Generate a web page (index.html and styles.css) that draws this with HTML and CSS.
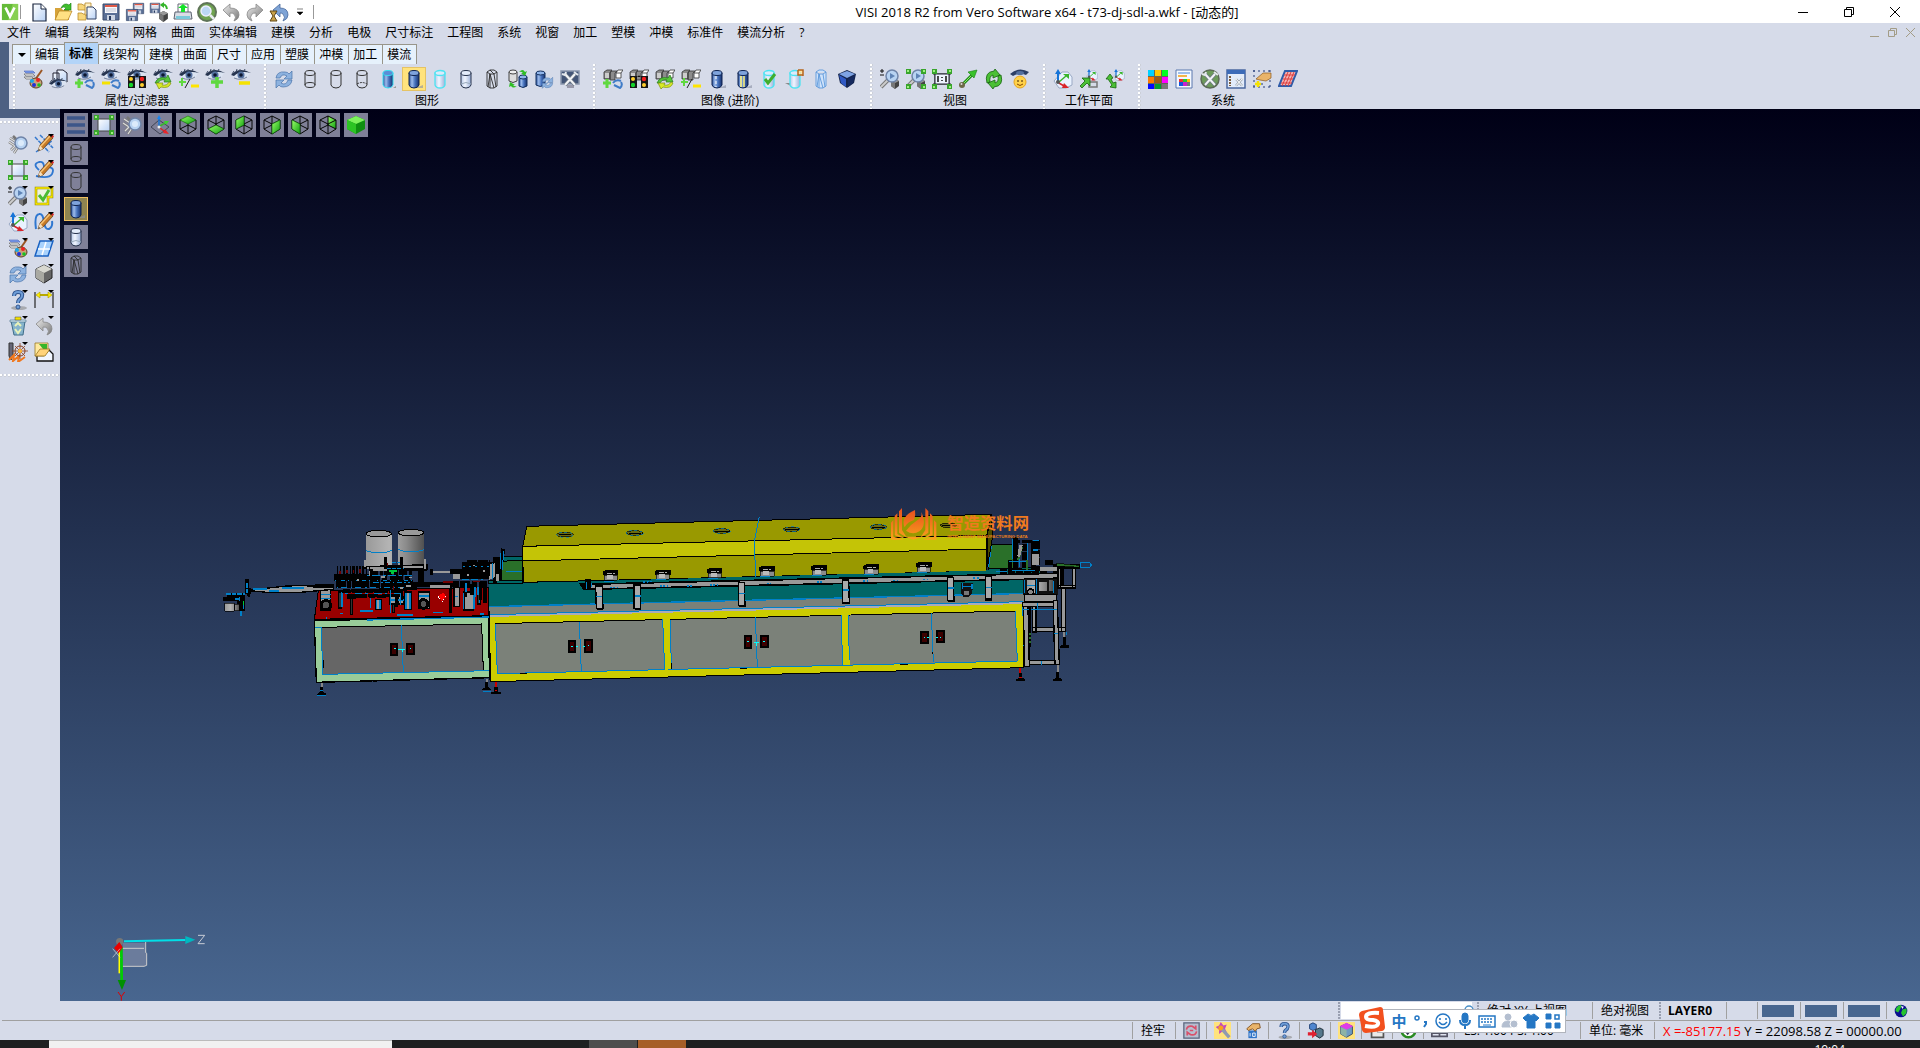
FILE: index.html
```html
<!DOCTYPE html>
<html lang="zh-CN">

<head>
  <meta charset="utf-8">
  <title>VISI 2018 R2</title>
  <link rel="stylesheet" href="styles.css">
</head>

<body>
  <!-- icon sprite, every icon sits in a 20x20 box -->
  <svg class="sprite" aria-hidden="true">
    <defs>
      <linearGradient id="gBlue"><stop offset="0" stop-color="#2c539c"/><stop offset=".3" stop-color="#9dbcec"/><stop offset=".6" stop-color="#4672bd"/><stop offset="1" stop-color="#17306c"/></linearGradient>
      <linearGradient id="gPale"><stop offset="0" stop-color="#b9c9e8"/><stop offset=".4" stop-color="#f0f5ff"/><stop offset="1" stop-color="#9db1d8"/></linearGradient>
      <linearGradient id="gGreen" x2="1" y2="1"><stop offset="0" stop-color="#9aff6a"/><stop offset="1" stop-color="#10a010"/></linearGradient>
      <linearGradient id="gGrey" x2="1" y2="1"><stop offset="0" stop-color="#eee"/><stop offset="1" stop-color="#777"/></linearGradient>
      <linearGradient id="gPaper" x2="1" y2="1"><stop offset="0" stop-color="#fff"/><stop offset="1" stop-color="#b9d2f5"/></linearGradient>
      <linearGradient id="gDrum"><stop offset="0" stop-color="#999"/><stop offset=".4" stop-color="#b4b4b4"/><stop offset=".7" stop-color="#8a8a8a"/><stop offset="1" stop-color="#505050"/></linearGradient>
      <linearGradient id="gLotus" x2="0" y2="1"><stop offset="0" stop-color="#e8501e"/><stop offset="1" stop-color="#f9a11c"/></linearGradient>
    </defs>

    <!-- small parts used inside other icons -->
    <symbol id="p-eye" viewBox="0 0 20 20"><path d="M0 6Q8-2 19 4L16 9Q9 12 3 8Z" fill="#dbe4f2"/><path d="M0 6Q8-3 20 4Q9 1 3 7Z" fill="#26344f"/><path d="M1 5L3 2M5 3L6 0M9 2V0M13 2L14 0" stroke="#3d4a62" stroke-width="1"/><circle cx="10" cy="6" r="3.500" fill="#54719f"/><circle cx="10" cy="6" r="1.800" fill="#0c1730"/><path d="M3 9Q10 12 16 8" stroke="#77839c" fill="none"/></symbol>
    <symbol id="p-plus" viewBox="0 0 20 20"><path d="M4 10v9M0 14h8" stroke="#5fd83f" stroke-width="3" fill="none"/></symbol>
    <symbol id="p-hook" viewBox="0 0 20 20"><path d="M10 14Q13 10 18 12M11 16L17 19Q20 16 18 13" stroke="#3f7cc8" stroke-width="2" fill="none"/></symbol>
    <symbol id="p-lights" viewBox="0 0 20 20"><path d="M1 7h7v12H1zM12 7h7v12h-7zM8 8q2-3 4 0" fill="#161616"/><circle cx="4" cy="10" r="2" fill="#ffcf2e"/><circle cx="4" cy="16" r="2.200" fill="#15d42a"/><circle cx="15" cy="10" r="2.200" fill="#f32020"/><circle cx="15" cy="16" r="2" fill="#ffcf2e"/></symbol>
    <symbol id="p-cycle" viewBox="0 0 20 20"><path d="M2 14Q5 7 13 9L15 6L18 13L11 13L12 11Q7 10 5 14Z" fill="#57c63a" stroke="#23791b" stroke-width=".7"/><path d="M18 14Q16 20 8 18L6 20L3 14L10 14L9 16Q14 17 16 13Z" fill="#d8ea28" stroke="#7c9010" stroke-width=".7"/></symbol>
    <symbol id="p-pm" viewBox="0 0 20 20"><path d="M3 9v8M0 13h7" stroke="#5fd83f" stroke-width="2"/><path d="M11 10L6 19" stroke="#222"/><path d="M12 17h8" stroke="#ffe400" stroke-width="3"/></symbol>
    <symbol id="p-cubes" viewBox="0 0 20 20"><path d="M1 3L4 1H9L7 3V10H1ZM7 4L9 2H14L12 4V11H7Z" fill="#8c8c8c" stroke="#333" stroke-width=".8"/><path d="M2 4h4v5H2z" fill="#ccc"/><path d="M13 4L15 1H20L18 4V9H13ZM13 4H18" fill="#fff" stroke="#333" stroke-width=".8"/></symbol>
    <symbol id="p-lens" viewBox="0 0 20 20"><path d="M1 18L8 11" stroke="#777" stroke-width="4"/><path d="M1 18L8 11" stroke="#ccc" stroke-width="2"/><circle cx="12" cy="7" r="6" fill="#b8d3f2" stroke="#6f84a8" stroke-width="1.500"/><path d="M10 4l5 3-5 3z" fill="#5f83b5"/></symbol>
    <symbol id="p-box" viewBox="0 0 20 20"><path d="M11 12L15 10L19 12V17L15 20L11 17Z" fill="#444"/><path d="M11 12L15 10L19 12L15 14Z" fill="#999"/><path d="M11 12L15 14V20L11 17Z" fill="#777"/></symbol>
    <symbol id="p-corners" viewBox="0 0 20 20"><path d="M0 0h5v5H0zM15 0h5v5h-5zM0 15h5v5H0zM15 15h5v5h-5z" fill="#39a52c"/><path d="M1 1h2v2H1zM17 1h2v2h-2zM1 17h2v2H1zM17 17h2v2h-2z" fill="#9df07f"/></symbol>
    <symbol id="p-pencil" viewBox="0 0 20 20"><path d="M4 17L6 11L15 1L19 4L9 15Z" fill="#c77b28" stroke="#5b3510" stroke-width=".7"/><path d="M7 12L16 2" stroke="#f7c374" stroke-width="1.500"/><path d="M4 17L6 11L9 15Z" fill="#f5dfbd"/><path d="M15 1l4 3 1-2-3-2z" fill="#d22"/><path d="M4 17l1-2 1 1z" fill="#222"/></symbol>
    <symbol id="p-tri" viewBox="0 0 20 20"><path d="M14 0h6l-3 3z" fill="#000"/></symbol>
    <symbol id="p-wrench" viewBox="0 0 20 20"><path d="M5 5L15 16M15 5L5 16" stroke="#707a88" stroke-width="3.500"/><path d="M5 5L15 16M15 5L5 16" stroke="#f2f4f6" stroke-width="2"/><path d="M2 5L5 6L6 3M14 3L18 6" stroke="#e4e8ec" stroke-width="2" fill="none"/></symbol>
    <symbol id="p-cube" viewBox="0 0 20 20"><path d="M10 1L18 5V14L10 19L2 14V5ZM10 9V19M2 5L10 9L18 5M10 1V10M2 14L10 10L18 14" fill="none" stroke="#050505"/></symbol>

    <!-- quick access -->
    <symbol id="visi" viewBox="0 0 20 20"><path d="M1 1h18v18H1z" fill="#64bb38"/><path d="M13 1h6v18H8z" fill="#87d052"/><path d="M5 5L10 15L15 5" stroke="#fff" stroke-width="3" fill="none"/></symbol>
    <symbol id="new" viewBox="0 0 20 20"><path d="M4 2H12L17 7V19H4Z" fill="url(#gPaper)" stroke="#1b2740" stroke-width="1.200"/><path d="M12 2V7H17" fill="#fff" stroke="#1b2740"/></symbol>
    <symbol id="open" viewBox="0 0 20 20"><path d="M2 6H8L10 8H16V18H2Z" fill="#d6a33a"/><path d="M2 18L6 9H19L15 18Z" fill="#ffe082" stroke="#b07b1a" stroke-width=".7"/><path d="M8 6Q11 0 16 3L18 1V8H11L13 6Q11 4 8 6Z" fill="#3fbf2c" stroke="#177a10" stroke-width=".6"/></symbol>
    <symbol id="opendoc" viewBox="0 0 20 20"><path d="M1 2H5L6 3H9V8H1ZM1 11H5L6 12H9V18H1Z" fill="#f8d77b" stroke="#b78a2c" stroke-width=".8"/><path d="M8 1H14V13H8Z" fill="#fff1c6" stroke="#b78a2c" stroke-width=".8"/><path d="M10 5H16L19 8V17H10Z" fill="url(#gPaper)" stroke="#324264"/></symbol>
    <symbol id="save" viewBox="0 0 20 20"><path d="M2 2H18V18H2Z" fill="#5a6f96" stroke="#3a4b6d"/><path d="M4 3H16V11H4Z" fill="#f7f7fb"/><path d="M4 3H16V5H4Z" fill="#e05a48"/><path d="M5 7H15M5 9H15" stroke="#a8b0c4" stroke-width=".7"/><path d="M6 13H14V18H6Z" fill="#cbd3e2"/><path d="M8 14h2v4H8z" fill="#26395f"/></symbol>
    <symbol id="saveall" viewBox="0 0 20 20"><use href="#save" x="7" y="0" width="13" height="13"/><use href="#save" x="0" y="6" width="14" height="14"/></symbol>
    <symbol id="savecube" viewBox="0 0 20 20"><use href="#save" x="0" y="0" width="12" height="12"/><path d="M12 3Q17 1 18 7" stroke="#35b52a" stroke-width="2" fill="none"/><path d="M11 3l4-3v6z" fill="#35b52a"/><use href="#p-box" x="-2" y="-2" width="22" height="22"/></symbol>
    <symbol id="print" viewBox="0 0 20 20"><path d="M5 2H15V11H5Z" fill="#fff" stroke="#667"/><path d="M2 10H18L19 17H1Z" fill="#d9dde4" stroke="#5c6370"/><path d="M3 14H17V17H3Z" fill="#7bc9d9"/><path d="M10 2L15 6H12V10H8V6H5Z" fill="#16e22a"/></symbol>
    <symbol id="search" viewBox="0 0 20 20"><circle cx="10" cy="10" r="9" fill="#6fa350" stroke="#5f7458" stroke-width="2"/><circle cx="9" cy="9" r="5" fill="#bcd8f4" stroke="#eef" stroke-width="1.500"/><path d="M13 13L17 17" stroke="#e8edf2" stroke-width="2.500"/></symbol>
    <symbol id="undo" viewBox="0 0 20 20"><path d="M2 8L9 2V6Q18 6 18 13Q18 17 13 19Q16 15 13 12Q12 11 9 11V15Z" fill="url(#gGrey)" stroke="#888" stroke-width=".8"/></symbol>
    <symbol id="redo" viewBox="0 0 20 20"><path d="M18 8L11 2V6Q2 6 2 13Q2 17 7 19Q4 15 7 12Q8 11 11 11V15Z" fill="url(#gGrey)" stroke="#888" stroke-width=".8"/></symbol>
    <symbol id="undohist" viewBox="0 0 20 20"><path d="M4 8L11 2V6Q19 6 19 13Q19 17 14 19Q17 15 14 12Q13 11 11 11V15Z" fill="#7fa4d6" stroke="#48689c" stroke-width=".8"/><path d="M1 9H8L5 14L8 19H1L4 14Z" fill="#c9a24a" stroke="#5e4614"/></symbol>

    <!-- attributes / filter -->
    <symbol id="palette" viewBox="0 0 20 20"><path d="M1 2H10L12 4H3Z" fill="#7d9ef0" stroke="#4b62b5" stroke-width=".6"/><path d="M1 5H10L12 7H3ZM1 8H9L11 10H3Z" fill="#f3f3f3" stroke="#666" stroke-width=".7"/><path d="M19 1L12 11" stroke="#9b5624" stroke-width="2"/><ellipse cx="13" cy="14" rx="6" ry="5" fill="#c9a178" stroke="#5b3f22"/><circle cx="15" cy="11" r="2" fill="#e22"/><circle cx="9" cy="12" r="2" fill="#19a8e8"/><circle cx="16" cy="16" r="1.800" fill="#17c321"/><circle cx="11" cy="16" r="2" fill="#2032d8"/></symbol>
    <symbol id="docseye" viewBox="0 0 20 20"><path d="M4 4H10V13H4ZM8 1H14L18 4V13H8Z" fill="url(#gPaper)" stroke="#223"/><use href="#p-eye" x="0" y="9" width="19" height="19"/></symbol>
    <symbol id="eyeplushook" viewBox="0 0 20 20"><use href="#p-eye"/><use href="#p-plus"/><use href="#p-hook"/></symbol>
    <symbol id="eyeminushook" viewBox="0 0 20 20"><use href="#p-eye"/><path d="M1 14H9" stroke="#f5e200" stroke-width="3"/><use href="#p-hook"/></symbol>
    <symbol id="eyelights" viewBox="0 0 20 20"><use href="#p-eye"/><use href="#p-lights"/></symbol>
    <symbol id="eyecycle" viewBox="0 0 20 20"><use href="#p-eye"/><use href="#p-cycle"/></symbol>
    <symbol id="eyepm" viewBox="0 0 20 20"><use href="#p-eye"/><use href="#p-pm"/></symbol>
    <symbol id="eyeplus" viewBox="0 0 20 20"><use href="#p-eye"/><path d="M12 8V19M6 13H18" stroke="#5fd83f" stroke-width="3.500"/></symbol>
    <symbol id="eyeminus" viewBox="0 0 20 20"><use href="#p-eye"/><path d="M8 14H19" stroke="#f5e200" stroke-width="3.500"/></symbol>

    <!-- shading -->
    <symbol id="refresh" viewBox="0 0 20 20"><path d="M2 9Q3 2 11 3Q14 3 15 5L18 2V10H10L13 7Q8 4 6 9Z" fill="#8db2df" stroke="#4973ab" stroke-width=".7"/><path d="M18 11Q17 18 9 18Q6 18 5 16L2 19V11H10L7 14Q12 17 14 11Z" fill="#8db2df" stroke="#4973ab" stroke-width=".7"/></symbol>
    <symbol id="cylwire" viewBox="0 0 20 20"><path d="M5 4V16M15 4V16" stroke="#333"/><ellipse cx="10" cy="4" rx="5" ry="2.500" fill="none" stroke="#333"/><ellipse cx="10" cy="16" rx="5" ry="2.500" fill="none" stroke="#333"/></symbol>
    <symbol id="cylhid" viewBox="0 0 20 20"><path d="M5 4V16Q6 19 10 19Q14 19 15 16V4" fill="none" stroke="#333"/><ellipse cx="10" cy="4" rx="5" ry="2.500" fill="none" stroke="#333"/></symbol>
    <symbol id="cyldash" viewBox="0 0 20 20"><use href="#cylhid"/><path d="M5 15Q10 12 15 15" fill="none" stroke="#333" stroke-dasharray="2 1"/></symbol>
    <symbol id="cylblue" viewBox="0 0 20 20"><path d="M12 19L19 16V19Z" fill="#8990a3" opacity=".6"/><path d="M5 4V16Q6 19 10 19Q14 19 15 16V4Z" fill="url(#gBlue)" stroke="#0e2350"/><ellipse cx="10" cy="4" rx="5" ry="2.500" fill="#7ea3dc" stroke="#0e2350"/></symbol>
    <symbol id="cylcyan" viewBox="0 0 20 20"><path d="M5 4V16Q6 19 10 19Q14 19 15 16V4Z" fill="url(#gBlue)" stroke="#37dff2"/><ellipse cx="10" cy="4" rx="5" ry="2.500" fill="#5b8dd6" stroke="#37dff2"/><path d="M15 19l3-2v2z" fill="#999"/></symbol>
    <symbol id="cylice" viewBox="0 0 20 20"><path d="M5 4V16Q6 19 10 19Q14 19 15 16V4Z" fill="url(#gPale)" stroke="#4de4f2" stroke-width="1.300"/><ellipse cx="10" cy="4" rx="5" ry="2.500" fill="#dceafa" stroke="#4de4f2" stroke-width="1.300"/></symbol>
    <symbol id="cylpale" viewBox="0 0 20 20"><path d="M5 4V16Q6 19 10 19Q14 19 15 16V4Z" fill="url(#gPale)" stroke="#26324c"/><ellipse cx="10" cy="4" rx="5" ry="2.500" fill="#e3ecfb" stroke="#26324c"/><path d="M5 15Q10 12 15 15" fill="none" stroke="#9ab"/></symbol>
    <symbol id="cylmesh" viewBox="0 0 20 20"><path d="M5 3L8 1H12L15 3V17L12 19H8L5 17ZM5 3L8 5H12L15 3M8 5L6 18M8 5L12 19M12 5L14 18M8 1L12 5M8 5V19" fill="none" stroke="#2a2a2a" stroke-width=".9"/></symbol>
    <symbol id="cylmeshblue" viewBox="0 0 20 20"><path d="M5 3L8 1H12L15 3V17L12 19H8L5 17ZM5 3L8 5H12L15 3M8 5L6 18M8 5L12 19M12 5L14 18M8 5V19" fill="#cfe2fa" stroke="#5b97da" stroke-width=".9"/></symbol>
    <symbol id="cylpair" viewBox="0 0 20 20"><path d="M1 3V12Q5 15 9 12V3" fill="#ddd" stroke="#444"/><ellipse cx="5" cy="3" rx="4" ry="2" fill="#eee" stroke="#444"/><path d="M11 8V17Q15 20 19 17V8" fill="url(#gBlue)" stroke="#14305f"/><ellipse cx="15" cy="8" rx="4" ry="2" fill="#8fb4ea" stroke="#14305f"/><path d="M11 3Q15-1 17 3L19 2L17 7L13 4L15 4Q13 2 11 3ZM9 17Q5 20 3 17L1 18L2 13L7 16H5Q7 18 9 17Z" fill="#2fbd25"/></symbol>
    <symbol id="cylrefresh" viewBox="0 0 20 20"><path d="M2 4V16Q6 19 11 16V4" fill="url(#gBlue)" stroke="#14305f"/><ellipse cx="6.500" cy="4" rx="4.500" ry="2" fill="#8fb4ea" stroke="#14305f"/><use href="#refresh" x="7" y="7" width="13" height="13"/></symbol>
    <symbol id="tools" viewBox="0 0 20 20"><path d="M1 2H19V15H1Z" fill="#435577" stroke="#8a97ad" stroke-width="1.500"/><path d="M7 16h7v3H7z" fill="#99a"/><use href="#p-wrench"/></symbol>

    <!-- advanced image -->
    <symbol id="cubeshook" viewBox="0 0 20 20"><use href="#p-cubes"/><use href="#p-plus"/><use href="#p-hook"/></symbol>
    <symbol id="cubeslights" viewBox="0 0 20 20"><use href="#p-cubes"/><use href="#p-lights"/></symbol>
    <symbol id="cubescycle" viewBox="0 0 20 20"><use href="#p-cubes"/><use href="#p-cycle"/></symbol>
    <symbol id="cubespm" viewBox="0 0 20 20"><use href="#p-cubes"/><use href="#p-pm"/></symbol>
    <symbol id="cylseam" viewBox="0 0 20 20"><use href="#cylblue"/><path d="M9 7V18" stroke="#fff" stroke-dasharray="3 2"/></symbol>
    <symbol id="cylstripe" viewBox="0 0 20 20"><use href="#cylblue"/><path d="M8 7V18M11 7V18" stroke="#fff27a" stroke-width="1.500"/></symbol>
    <symbol id="cylcheck" viewBox="0 0 20 20"><use href="#cylice"/><path d="M6 10L9 14L16 5" stroke="#3fae2c" stroke-width="3" fill="none"/></symbol>
    <symbol id="cylcorner" viewBox="0 0 20 20"><path d="M0 14H8V18Z" fill="#888"/><use href="#cylice"/><path d="M13 1h5v6M13 1v5h5" fill="#ffe2a0" stroke="#b5651d" stroke-width="1.500"/></symbol>
    <symbol id="cubeblue" viewBox="0 0 20 20"><path d="M1 5L10 1L19 5L17 14L10 19L3 14Z" fill="#14244c"/><path d="M2 5L10 2L18 5L10 9Z" fill="#7fa4e4"/><path d="M2 6L9 10V18L4 14Z" fill="#3059c4"/><path d="M11 10L18 6L16 14L11 18Z" fill="#16295e"/></symbol>

    <!-- view -->
    <symbol id="zoompm" viewBox="0 0 20 20"><use href="#p-box"/><use href="#p-lens"/><path d="M0 2h4M2 0v4M0 6h4" stroke="#111"/></symbol>
    <symbol id="zoomfit" viewBox="0 0 20 20"><use href="#p-box"/><use href="#p-lens"/><use href="#p-corners"/></symbol>
    <symbol id="fit11" viewBox="0 0 20 20"><path d="M3 1V19M17 1V19M1 5H19M1 15H19" stroke="#222"/><path d="M3 5H17V15H3Z" fill="#eef3ff" stroke="#223"/><path d="M6 7V13M14 7V13M10 8v1M10 11v1" stroke="#111" stroke-width="1.500"/><use href="#p-corners"/></symbol>
    <symbol id="line" viewBox="0 0 20 20"><path d="M4 16L15 5" stroke="#1f8f16" stroke-width="3"/><path d="M4 16L15 5" stroke="#8ee86c" stroke-width="1"/><path d="M19 1L10 3L16 9Z" fill="#39c22a" stroke="#177a10" stroke-width=".6"/><circle cx="4" cy="16" r="3" fill="#6d6a48"/><circle cx="3.500" cy="15" r="1" fill="#ddd"/></symbol>
    <symbol id="rotate" viewBox="0 0 20 20"><path d="M3 14Q0 3 10 2L11 0L16 6L9 9V6Q5 7 6 13ZM17 6Q20 17 10 18L9 20L4 14L11 11V14Q15 13 14 7Z" fill="#4bc035" stroke="#17650f" stroke-width=".8"/></symbol>
    <symbol id="smile" viewBox="0 0 20 20"><circle cx="10" cy="13" r="6" fill="#ffd24a" stroke="#e8a51f"/><path d="M7 15Q10 18 13 15" stroke="#8a4a00" fill="none"/><path d="M8 11v2M12 11v2" stroke="#402000"/><path d="M0 5Q9-3 19 3L16 6Q9 3 3 7Z" fill="#2c3f66"/><ellipse cx="10" cy="4" rx="4" ry="2" fill="#54709f"/></symbol>

    <!-- work plane -->
    <symbol id="axes" viewBox="0 0 20 20"><path d="M1 12L9 3H15L19 8V16L13 19H6Z" fill="#e9f2ff" stroke="#9aa9c4"/><path d="M5 13V4" stroke="#1674d8" stroke-width="2"/><path d="M2 5L5 0L8 5Z" fill="#1674d8"/><path d="M6 13L13 7" stroke="#39b52c" stroke-width="1.500"/><path d="M10 5H16V10Z" fill="#39b52c"/><path d="M6 14L11 17" stroke="#d9252a" stroke-width="1.500"/><path d="M9 19L11 14L16 19Z" fill="#d9252a"/><circle cx="5" cy="13" r="2" fill="#555"/></symbol>
    <symbol id="axesdark" viewBox="0 0 20 20"><path d="M1 12L9 5L19 12L10 19Z" fill="none" stroke="#3f4354"/><path d="M9 12V3" stroke="#1674d8" stroke-width="1.500"/><path d="M7 4L9 0L11 4Z" fill="#1684f0"/><path d="M10 11L15 8" stroke="#39b52c" stroke-width="1.500"/><path d="M14 6H19L16 10Z" fill="#39d52c"/><path d="M10 13L14 16" stroke="#d9252a" stroke-width="1.500"/><path d="M13 18L15 14L19 19Z" fill="#e9252a"/><circle cx="9" cy="12" r="1.500" fill="#eee"/></symbol>
    <symbol id="axesmove" viewBox="0 0 20 20"><use href="#axes" x="7" y="0" width="12" height="12"/><path d="M10 13H18V18H10Z" fill="none" stroke="#777" stroke-width="1.500"/><path d="M1 17L6 12L3 9H11V17L8 14L3 19Z" fill="#4bc035" stroke="#17650f" stroke-width=".8"/></symbol>
    <symbol id="axesswap" viewBox="0 0 20 20"><use href="#axes" x="8" y="0" width="12" height="12"/><path d="M1 10L5 5L8 9L6 10L8 14L11 13V19L5 18L7 16L3 10Z" fill="#4bc035" stroke="#17650f" stroke-width=".8"/></symbol>

    <!-- system -->
    <symbol id="colors" viewBox="0 0 20 20"><path d="M0 1h20v19H0z" fill="#665"/><path d="M0 1h6v6H0z" fill="#00d0ff"/><path d="M7 1h6v6H7z" fill="#ffc800"/><path d="M14 1h6v6h-6z" fill="#00ff20"/><path d="M0 8h6v6H0z" fill="#ff7a00"/><path d="M7 8h6v6H7z" fill="#a05a10"/><path d="M14 8h6v6h-6z" fill="#f0f"/><path d="M0 15h6v5H0z" fill="#0008ff"/><path d="M7 15h6v5H7z" fill="#00a030"/><path d="M14 15h6v5h-6z" fill="#777"/></symbol>
    <symbol id="doccolors" viewBox="0 0 20 20"><path d="M2 1H18V19H2Z" fill="#f4f8ff" stroke="#5b79ae"/><path d="M4 3h12v2H4z" fill="#9fc0ec"/><path d="M4 6h9v2H4z" fill="#f3b54a"/><path d="M5 10h4v3H5z" fill="#e33"/><path d="M9 10h4v3H9z" fill="#2c3"/><path d="M13 10h3v3h-3z" fill="#fb0"/><path d="M5 13h4v4H5z" fill="#15d"/><path d="M9 13h4v4H9z" fill="#c2c"/><path d="M13 13h3v4h-3z" fill="#777"/></symbol>
    <symbol id="toolsgreen" viewBox="0 0 20 20"><circle cx="10" cy="10" r="9" fill="#6c9a5a" stroke="#5c6b56" stroke-width="1.500"/><use href="#p-wrench"/></symbol>
    <symbol id="wintools" viewBox="0 0 20 20"><path d="M1 1H19V19H1Z" fill="#e3ecfa" stroke="#4b68a0" stroke-width="1.500"/><path d="M1 1H19V5H1Z" fill="#3c6bb8"/><path d="M4 7v10" stroke="#7a5a3a" stroke-width="2" stroke-dasharray="2 1"/><use href="#p-wrench" x="7" y="7" width="12" height="12"/></symbol>
    <symbol id="gridhand" viewBox="0 0 20 20"><path d="M1 2H19M1 18H19M2 1V19M18 1V19M10 14V19" stroke="#233a78" stroke-dasharray="2 3"/><path d="M4 10L11 4H19V9L14 12L8 11Z" fill="#e9b46a" stroke="#8d5a1c" stroke-width=".7"/><path d="M6 12V18M3 15H9" stroke="#f5e200" stroke-width="2.500"/></symbol>
    <symbol id="gridplane" viewBox="0 0 20 20"><path d="M7 2H19L13 17H1Z" fill="#f3b4b4" stroke="#2f5ca9" stroke-width="2"/><path d="M10 3L4 17M13 3L7 17M16 3L10 17M6 6H17M5 10H15M3 14H14" stroke="#dd3f3f"/></symbol>

    <!-- side bar -->
    <symbol id="zoomhand" viewBox="0 0 20 20"><path d="M2 4L8 8M1 8L7 12M3 16L8 11M6 19L10 13M5 2L9 6" stroke="#777" stroke-width="2.500"/><path d="M2 4L8 8M1 8L7 12M3 16L8 11M6 19L10 13" stroke="#ddd" stroke-width="1.300"/><circle cx="13" cy="9" r="6" fill="#b8d3f2" stroke="#6f84a8" stroke-width="1.500"/><circle cx="13" cy="9" r="3" fill="#dcebfb"/></symbol>
    <symbol id="fitwin" viewBox="0 0 20 20"><path d="M4 4H16V16H4Z" fill="url(#gPaper)" stroke="#444"/><use href="#p-corners"/></symbol>
    <symbol id="help" viewBox="0 0 20 20"><ellipse cx="11" cy="18" rx="8" ry="2" fill="#888" opacity=".6"/><path d="M6 6Q6 2 10 2Q15 2 14 6Q14 8 11 10Q10 11 10 13" stroke="#30558f" stroke-width="4" fill="none"/><path d="M6 6Q6 2 10 2Q15 2 14 6Q14 8 11 10Q10 11 10 13" stroke="#6f9ed8" stroke-width="2" fill="none"/><circle cx="10" cy="17" r="2" fill="#6f9ed8" stroke="#30558f"/></symbol>
    <symbol id="trash" viewBox="0 0 20 20"><path d="M3 5H17L15 19H6Z" fill="#86b4cc" stroke="#3f6c88"/><path d="M2 4H18V6H2Z" fill="#d5e8f2" stroke="#3f6c88" stroke-width=".6"/><path d="M7 4L7 1H13V4Z" fill="#f5e200" stroke="#444" stroke-width=".5"/><path d="M7 10L10 7L13 10M7 13L10 17L13 13" stroke="#e8f2b8" stroke-width="2" fill="none"/></symbol>
    <symbol id="wheel" viewBox="0 0 20 20"><path d="M1 1H5V14L3 18L1 14Z" fill="#667" stroke="#333"/><path d="M1 18L6 13L5 19L11 14L10 20L17 15" stroke="#f0781e" stroke-width="2" fill="none"/><circle cx="12" cy="9" r="5" fill="none" stroke="#8b3f1f"/><path d="M12 1V17M4 9H20M7 4L17 14M17 4L7 14" stroke="#8b3f1f" stroke-width=".8"/><circle cx="12" cy="9" r="2" fill="#ffb32e"/></symbol>
    <symbol id="penlines" viewBox="0 0 20 20"><path d="M1 3L15 18M2 18L18 7M6 1L19 14" stroke="#3579cf" stroke-width="1.500" stroke-dasharray="4 1"/><use href="#p-pencil"/></symbol>
    <symbol id="pencurve" viewBox="0 0 20 20"><path d="M5 10Q-2 4 5 2Q10 1 10 7Q22 6 18 14Q15 19 2 16" stroke="#2f77d0" stroke-width="1.800" fill="none"/><use href="#p-pencil"/></symbol>
    <symbol id="penwave" viewBox="0 0 20 20"><path d="M2 17Q0 3 5 2Q9 1 10 10Q11 18 15 17Q19 15 18 9" stroke="#2f77d0" stroke-width="2" fill="none"/><use href="#p-pencil"/></symbol>
    <symbol id="selcheck" viewBox="0 0 20 20"><path d="M2 2H18V11H14V18H2Z" fill="#eef3e0" stroke="#8a8000" stroke-width="2.500"/><path d="M2 2H18V11H14V18H2Z" fill="none" stroke="#ffee00" stroke-width="1.300"/><path d="M5 9L9 14L15 4" stroke="#4bbb33" stroke-width="3" fill="none"/></symbol>
    <symbol id="plane" viewBox="0 0 20 20"><path d="M6 3H19L14 18H1Z" fill="#a9d2fc" stroke="#1b63c2" stroke-width="1.500"/><path d="M12 4L8 17M4 11H16" stroke="#fff" stroke-width="1.500"/></symbol>
    <symbol id="cubegrey" viewBox="0 0 20 20"><path d="M10 1L18 5V14L10 19L2 14V5Z" fill="#666" stroke="#222"/><path d="M10 1L18 5L10 9L2 5Z" fill="#d8d8d0"/><path d="M2 5L10 9V19L2 14Z" fill="#a9a9a2"/></symbol>
    <symbol id="dim" viewBox="0 0 20 20"><path d="M1 2V18M19 2V18" stroke="#333" stroke-width="1.300"/><path d="M4 5H16" stroke="#b8a800" stroke-width="2"/><path d="M2 5L6 2V8ZM18 5L14 2V8Z" fill="#ffee00" stroke="#a89800" stroke-width=".6"/></symbol>
    <symbol id="foldoc" viewBox="0 0 20 20"><path d="M3 8H15L19 12V19H3Z" fill="#f1f6ff" stroke="#111" stroke-width="1.300"/><path d="M1 1H14V10L10 14H1Z" fill="#ffe9a0" stroke="#9b7a25" stroke-width=".8"/><path d="M5 2h8v5H9z" fill="#36b52a"/><path d="M1 14L6 7H16L11 14Z" fill="#ffd37a" stroke="#9b7a25" stroke-width=".8"/></symbol>

    <!-- view cubes -->
    <symbol id="bars" viewBox="0 0 20 20"><path d="M1 3H19M1 10H19M1 17H19" stroke="#3d5689" stroke-width="3.500"/></symbol>
    <symbol id="cubetop" viewBox="0 0 20 20"><path d="M10 1L18 5L10 9L2 5Z" fill="url(#gGreen)"/><path d="M10 9V19M10 10L2 14M10 10L18 14M2 5V14L10 19L18 14V5Z" fill="none" stroke="#050505"/><path d="M10 1L18 5L10 9L2 5Z" fill="url(#gGreen)" stroke="#0b5a0b" stroke-width=".6"/></symbol>
    <symbol id="cubebottom" viewBox="0 0 20 20"><use href="#p-cube"/><path d="M10 10L18 14L10 19L2 14Z" fill="url(#gGreen)" stroke="#0b5a0b" stroke-width=".6"/></symbol>
    <symbol id="cubeback" viewBox="0 0 20 20"><use href="#p-cube"/><path d="M10 1V10L2 14V5Z" fill="url(#gGreen)" stroke="#0b5a0b" stroke-width=".6"/></symbol>
    <symbol id="cuberight" viewBox="0 0 20 20"><use href="#p-cube"/><path d="M10 9L18 5V14L10 19Z" fill="url(#gGreen)" stroke="#0b5a0b" stroke-width=".6"/></symbol>
    <symbol id="cubefront" viewBox="0 0 20 20"><use href="#p-cube"/><path d="M2 5L10 9V19L2 14Z" fill="url(#gGreen)" stroke="#0b5a0b" stroke-width=".6"/></symbol>
    <symbol id="cubeleft" viewBox="0 0 20 20"><path d="M10 1L18 5V14L10 10Z" fill="url(#gGreen)"/><use href="#p-cube"/></symbol>
    <symbol id="cubeiso" viewBox="0 0 20 20"><path d="M10 1L19 5V14L10 19L1 14V5Z" fill="#0f8f10"/><path d="M10 1L19 5L10 9L1 5Z" fill="#7df25c"/><path d="M1 5L10 9V19L1 14Z" fill="#2cc424"/></symbol>

    <!-- status bar -->
    <symbol id="st-swirl" viewBox="0 0 20 20"><path d="M1 1H19V19H1Z" fill="#b7bfd0" stroke="#5a657d" stroke-width="1.500"/><path d="M4 9Q5 4 11 5L15 8V4M16 11Q15 16 9 15L5 12V16M8 10H12" stroke="#d9506a" stroke-width="2" fill="none"/></symbol>
    <symbol id="st-wand" viewBox="0 0 20 20"><path d="M0 0H20V20H0Z" fill="#ffe37d"/><path d="M2 6L6 4L8 0L11 4L15 3L13 8L15 12L10 11L6 14L6 9Z" fill="#c24ac0"/><circle cx="8" cy="7" r="3" fill="#f9a11c"/><path d="M10 9L18 18" stroke="#8f9bb0" stroke-width="4"/></symbol>
    <symbol id="st-hand" viewBox="0 0 20 20"><path d="M4 10H14V19H4Z" fill="#2d73c8"/><path d="M6 13v4M9 13h3v4H9z" stroke="#fff" fill="none"/><path d="M2 8L9 2H17L18 7L14 8L12 11L9 8L4 10Z" fill="#e9b46a" stroke="#7d4a14"/></symbol>
    <symbol id="st-link" viewBox="0 0 20 20"><path d="M3 3L7 1L11 3V8L7 10L3 8Z" fill="#4f86cf" stroke="#1c3c70"/><path d="M10 9L15 7L19 9V16L15 19L10 16Z" fill="#56788c" stroke="#12202b"/><path d="M1 12H6V9L12 14L6 19V16H1Z" fill="#e02030"/></symbol>
    <symbol id="st-cube" viewBox="0 0 20 20"><path d="M0 0H20V20H0Z" fill="#ffe37d"/><path d="M10 2L17 5V14L10 18L3 14V5Z" fill="#6e9ac0" stroke="#33445c"/><path d="M10 1L18 5L10 9L2 5Z" fill="#e03ce8"/><path d="M3 6L10 9V18L3 14Z" fill="#8db3a6"/></symbol>
    <symbol id="st-doc" viewBox="0 0 20 20"><path d="M3 2H17V18H3Z" fill="#e8e8e8" stroke="#555" stroke-width="2"/></symbol>
    <symbol id="st-check" viewBox="0 0 20 20"><circle cx="10" cy="10" r="8" fill="#fff" stroke="#2a8b22" stroke-width="3"/><path d="M6 10L9 14L15 7" stroke="#335" stroke-width="2" fill="none"/></symbol>
    <symbol id="st-split" viewBox="0 0 20 20"><path d="M1 2H19V17H1ZM10 2V17M1 13H19" fill="#dfe3ef" stroke="#556" stroke-width="2"/></symbol>
    <symbol id="globe" viewBox="0 0 20 20"><circle cx="10" cy="10" r="9" fill="#0a1090"/><path d="M3 6Q7 0 11 2L9 7L6 12L2 10ZM12 8L18 6V13L13 18L10 13Z" fill="#26c430"/><path d="M10 3L14 4L12 7Z" fill="#fff"/></symbol>
  </svg>

  <header class="titlebar">
    <svg class="logo"><use href="#visi"/></svg>
    <div class="quick">
      <button title="新建"><svg><use href="#new"/></svg></button>
      <button title="打开"><svg><use href="#open"/></svg></button>
      <button title="插入"><svg><use href="#opendoc"/></svg></button>
      <button title="保存"><svg><use href="#save"/></svg></button>
      <button title="全部保存"><svg><use href="#saveall"/></svg></button>
      <button title="保存所选"><svg><use href="#savecube"/></svg></button>
      <button title="打印"><svg><use href="#print"/></svg></button>
      <button title="预览"><svg><use href="#search"/></svg></button>
      <button title="撤销"><svg><use href="#undo"/></svg></button>
      <button title="重做"><svg><use href="#redo"/></svg></button>
      <button title="历史"><svg><use href="#undohist"/></svg></button>
      <button title="自定义" class="more"><svg viewBox="0 0 8 8"><path d="M1 1h6M1 4h6L4 7z" fill="#000" stroke="#000" stroke-width=".5"/></svg></button>
    </div>
    <h1>VISI 2018 R2 from Vero Software x64 - t73-dj-sdl-a.wkf - [动态的]</h1>
    <div class="window-buttons">
      <button title="最小化"><svg viewBox="0 0 12 12"><path d="M1 6.500h10"/></svg></button>
      <button title="还原"><svg viewBox="0 0 12 12"><path d="M1.500 3.500h7v7h-7zM3.500 3.500v-2h7v7h-2"/></svg></button>
      <button title="关闭"><svg viewBox="0 0 12 12"><path d="M1 1l10 10M11 1L1 11"/></svg></button>
    </div>
  </header>

  <nav class="menubar">
    <a href="#">文件</a><a href="#">编辑</a><a href="#">线架构</a><a href="#">网格</a><a href="#">曲面</a><a href="#">实体编辑</a><a href="#">建模</a><a href="#">分析</a><a href="#">电极</a><a href="#">尺寸标注</a><a href="#">工程图</a><a href="#">系统</a><a href="#">视窗</a><a href="#">加工</a><a href="#">塑模</a><a href="#">冲模</a><a href="#">标准件</a><a href="#">模流分析</a><a href="#">?</a>
    <div class="doc-buttons">
      <button title="最小化"><svg viewBox="0 0 12 12"><path d="M1 9.500h9"/></svg></button>
      <button title="还原"><svg viewBox="0 0 12 12"><path d="M1.500 3.500h6v6h-6zM3.500 3.500v-2h6v6h-2"/></svg></button>
      <button title="关闭"><svg viewBox="0 0 12 12"><path d="M1 1l9 9M10 1l-9 9"/></svg></button>
    </div>
  </nav>

  <section class="ribbon">
    <div class="tabs">
      <button class="drop" title="更多"><svg viewBox="0 0 8 8"><path d="M0 2h8L4 6z"/></svg></button>
      <button>编辑</button>
      <button class="active">标准</button>
      <button>线架构</button>
      <button>建模</button>
      <button>曲面</button>
      <button>尺寸</button>
      <button>应用</button>
      <button>塑膜</button>
      <button>冲模</button>
      <button>加工</button>
      <button>模流</button>
    </div>
    <div class="groups">
      <div class="group">
        <div class="tools">
          <button><svg><use href="#palette"/></svg></button>
          <button><svg><use href="#docseye"/></svg></button>
          <button><svg><use href="#eyeplushook"/></svg></button>
          <button><svg><use href="#eyeminushook"/></svg></button>
          <button><svg><use href="#eyelights"/></svg></button>
          <button><svg><use href="#eyecycle"/></svg></button>
          <button><svg><use href="#eyepm"/></svg></button>
          <button><svg><use href="#eyeplus"/></svg></button>
          <button><svg><use href="#eyeminus"/></svg></button>
        </div>
        <h2>属性/过滤器</h2>
      </div>
      <div class="group">
        <div class="tools">
          <button><svg><use href="#refresh"/></svg></button>
          <button><svg><use href="#cylwire"/></svg></button>
          <button><svg><use href="#cylhid"/></svg></button>
          <button><svg><use href="#cyldash"/></svg></button>
          <button><svg><use href="#cylcyan"/></svg></button>
          <button class="on"><svg><use href="#cylblue"/></svg></button>
          <button><svg><use href="#cylice"/></svg></button>
          <button><svg><use href="#cylpale"/></svg></button>
          <button><svg><use href="#cylmesh"/></svg></button>
          <button><svg><use href="#cylpair"/></svg></button>
          <button><svg><use href="#cylrefresh"/></svg></button>
          <button><svg><use href="#tools"/></svg></button>
        </div>
        <h2>图形</h2>
      </div>
      <div class="group">
        <div class="tools">
          <button><svg><use href="#cubeshook"/></svg></button>
          <button><svg><use href="#cubeslights"/></svg></button>
          <button><svg><use href="#cubescycle"/></svg></button>
          <button><svg><use href="#cubespm"/></svg></button>
          <button><svg><use href="#cylseam"/></svg></button>
          <button><svg><use href="#cylstripe"/></svg></button>
          <button><svg><use href="#cylcheck"/></svg></button>
          <button><svg><use href="#cylcorner"/></svg></button>
          <button><svg><use href="#cylmeshblue"/></svg></button>
          <button><svg><use href="#cubeblue"/></svg></button>
        </div>
        <h2>图像 (进阶)</h2>
      </div>
      <div class="group">
        <div class="tools">
          <button><svg><use href="#zoompm"/></svg></button>
          <button><svg><use href="#zoomfit"/></svg></button>
          <button><svg><use href="#fit11"/></svg></button>
          <button><svg><use href="#line"/></svg></button>
          <button><svg><use href="#rotate"/></svg></button>
          <button><svg><use href="#smile"/></svg></button>
        </div>
        <h2>视图</h2>
      </div>
      <div class="group">
        <div class="tools">
          <button><svg><use href="#axes"/></svg></button>
          <button><svg><use href="#axesmove"/></svg></button>
          <button><svg><use href="#axesswap"/></svg></button>
        </div>
        <h2>工作平面</h2>
      </div>
      <div class="group">
        <div class="tools">
          <button><svg><use href="#colors"/></svg></button>
          <button><svg><use href="#doccolors"/></svg></button>
          <button><svg><use href="#toolsgreen"/></svg></button>
          <button><svg><use href="#wintools"/></svg></button>
          <button><svg><use href="#gridhand"/></svg></button>
          <button><svg><use href="#gridplane"/></svg></button>
        </div>
        <h2>系统</h2>
      </div>
    </div>
  </section>

  <main>
    <aside class="sidebar">
      <div class="palette">
        <button><svg><use href="#zoomhand"/></svg></button>
        <button><svg><use href="#penlines"/><use href="#p-tri"/></svg></button>
        <button><svg><use href="#fitwin"/></svg></button>
        <button><svg><use href="#pencurve"/><use href="#p-tri"/></svg></button>
        <button><svg><use href="#zoompm"/><use href="#p-tri"/></svg></button>
        <button><svg><use href="#selcheck"/><use href="#p-tri"/></svg></button>
        <button><svg><use href="#axes"/><use href="#p-tri"/></svg></button>
        <button><svg><use href="#penwave"/><use href="#p-tri"/></svg></button>
        <button><svg><use href="#palette"/><use href="#p-tri"/></svg></button>
        <button><svg><use href="#plane"/><use href="#p-tri"/></svg></button>
        <button><svg><use href="#refresh"/><use href="#p-tri"/></svg></button>
        <button><svg><use href="#cubegrey"/><use href="#p-tri"/></svg></button>
        <button><svg><use href="#help"/><use href="#p-tri"/></svg></button>
        <button><svg><use href="#dim"/><use href="#p-tri"/></svg></button>
        <button><svg><use href="#trash"/><use href="#p-tri"/></svg></button>
        <button><svg><use href="#undo"/><use href="#p-tri"/></svg></button>
        <button><svg><use href="#wheel"/><use href="#p-tri"/></svg></button>
        <button><svg><use href="#foldoc"/></svg></button>
      </div>
    </aside>

    <div class="viewport">
      <!-- three units per screen pixel -->
      <svg class="scene" viewBox="-420 -1173 5580 2676" preserveAspectRatio="xMinYMin meet" shape-rendering="crispEdges">
        <!-- green guards -->
        <g stroke="#000" stroke-width="3">
          <path d="M905 182L968 180V240L905 243Z" fill="#2a7029"/>
          <path d="M910 171L968 169V180L905 184Z" fill="#066"/>
          <path d="M2365 135L2440 133V206L2365 208Z" fill="#2a7029"/>
          <path d="M2365 206L2520 203V225L2365 228Z" fill="#066"/>
        </g>
        <path d="M918 214H966M2376 125L2366 200" stroke="#0080c8" stroke-width="3"/>

        <!-- conveyor bed -->
        <path d="M866 250L2490 212V285L866 320Z" fill="#066"/>
        <path d="M866 320L2490 280V308L866 348Z" fill="#7b8179"/>
        <path d="M866 320L2490 280" stroke="#0080c8" stroke-width="4"/>
        <path d="M866 240H968V249H866Z" fill="#066" stroke="#000" stroke-width="3"/>

        <!-- hood -->
        <g stroke="#000" stroke-width="3">
          <path d="M980 79L2373 43L2360 106L968 139Z" fill="#990"/>
          <path d="M968 139L2360 106V147L968 183Z" fill="#c4c406"/>
          <path d="M968 183L2360 147V213L972 247Z" fill="#990"/>
          <path d="M2373 43L2378 110L2362 200V106Z" fill="#4d4d00"/>
        </g>
        <path d="M1678 50L1664 120L1666 232" stroke="#0080c8" stroke-width="3" fill="none"/>
        <g fill="#6b6b10" stroke="#000" stroke-width="2">
          <ellipse cx="1095" cy="104" rx="25" ry="7"/><ellipse cx="1305" cy="99" rx="25" ry="7"/>
          <ellipse cx="1566" cy="93" rx="25" ry="7"/><ellipse cx="1775" cy="88" rx="25" ry="7"/>
          <ellipse cx="2035" cy="81" rx="25" ry="7"/><ellipse cx="2245" cy="76" rx="25" ry="7"/>
        </g>
        <g fill="none" stroke="#0080c8" stroke-width="2" stroke-dasharray="9 7">
          <ellipse cx="1095" cy="104" rx="25" ry="8"/><ellipse cx="1305" cy="99" rx="25" ry="8"/>
          <ellipse cx="1566" cy="93" rx="25" ry="8"/><ellipse cx="1775" cy="88" rx="25" ry="8"/>
          <ellipse cx="2035" cy="81" rx="25" ry="8"/>
        </g>
        <path d="M1076 104H1114M1286 99H1324M1546 93H1586M1756 88H1796M2015 81H2055M2225 76H2270" stroke="#000" stroke-width="3"/>

        <!-- long cabinet -->
        <path d="M866 346L2470 308V503L872 545Z" fill="#cc0" stroke="#000" stroke-width="3"/>
        <path d="M866 348L2470 309" stroke="#aab" stroke-width="6"/>
        <path d="M866 344L2470 305" stroke="#0080c8" stroke-width="3"/>
        <path d="M886 371L2446 333L2452 483L892 521Z" fill="#7b8179"/>
        <path d="M886 371L2446 333" stroke="#000" stroke-width="3"/>
        <path d="M892 521L2452 483" stroke="#0080c8" stroke-width="3"/>
        <g fill="#cc0">
          <path d="M1388 358L1410 356L1415 508L1394 509Z"/>
          <path d="M1923 345L1945 343L1949 494L1928 495Z"/>
        </g>
        <path d="M886 372L892 520M1388 358L1394 508M1410 358L1414 490M1923 345L1928 494M1945 345L1948 480M2446 333L2452 483M2468 315L2474 500M1138 366L1144 515M1666 352L1672 500M2194 340L2200 487" stroke="#0080c8" stroke-width="3" fill="none"/>
        <path d="M1520 354h26M2000 343h20M960 519h20M1620 504h20M2100 492h24M1414 490v18M2197 455v8" stroke="#000" stroke-width="3"/>

        <!-- small cabinet -->
        <path d="M343 362L866 350L872 533L349 547Z" fill="#9c9" stroke="#000" stroke-width="4"/>
        <path d="M364 382L845 372L850 512L368 523Z" fill="#666"/>
        <path d="M364 382L845 372L850 512" stroke="#000" stroke-width="3" fill="none"/>
        <path d="M364 382L368 523L870 512M604 376L610 517M346 381H364" stroke="#0080c8" stroke-width="3" fill="none"/>
        <path d="M520 543L640 538M370 480V505M655 377h24M866 262L868 540" stroke="#000" stroke-width="4"/>

        <!-- door handles -->
        <g fill="#3d0000" stroke="#000" stroke-width="6">
          <path d="M574 433h17v31h-17zM622 431h19v32h-19zM1107 423h18v32h-18zM1156 421h19v34h-19zM1635 409h18v34h-18zM1684 409h19v31h-19zM2164 395h19v34h-19zM2212 393h19v34h-19z"/>
        </g>
        <path d="M594 449H616M607 449v8M1661 427H1678M1668 427v10M1128 438h6M1150 438h6M2182 412h6M2208 412h6M583 446h4M630 446h4M1114 440h4M1164 436h4M1642 424h4M1690 424h4M2171 411h4M2220 411h4" stroke="#0ff" stroke-width="3"/>

        <!-- red table with stations -->
        <path d="M355 272L866 262V347L343 358Z" fill="#900" stroke="#000" stroke-width="3"/>
        <path d="M343 360L866 349" stroke="#000" stroke-width="6"/>
        <path d="M500 360L866 351M480 333h40M590 345h50M700 338h30M380 350v6M420 341h8M840 342h12" stroke="#0080c8" stroke-width="4"/>
        <g fill="#999" stroke="#000" stroke-width="4">
          <path d="M362 264h30v66h-30zM655 276h34v50h-34zM762 262h16v58h-16zM615 276h20v52h-20zM526 298h18v30h-18zM792 276h28v54h-28zM570 290h16v22h-16zM594 290h16v22h-16z"/>
          <path d="M416 276h8v48h-8zM452 290h6v54h-6zM748 264h5v72h-5zM578 312h6v26h-6zM833 262h8v50h-8zM852 262h6v46h-6z" fill="#333"/>
        </g>
        <path d="M362 284h30M362 296h30M618 280v46M630 280v46M530 300v28M540 300v28M790 280v48M822 280v48M765 290h10M658 288h28M572 300h40M512 294v30M426 276v46M838 266v44" stroke="#0080c8" stroke-width="4"/>
        <circle cx="378" cy="316" r="14" fill="#555" stroke="#000" stroke-width="9"/>
        <circle cx="670" cy="312" r="13" fill="#555" stroke="#000" stroke-width="9"/>
        <path d="M716 286L732 278L738 292L724 302Z" fill="#f00"/>
        <path d="M714 290L726 304L738 290" fill="none" stroke="#fff" stroke-width="3" stroke-dasharray="3 3"/>
        <path d="M426 274L650 266M440 292L560 288" stroke="#000" stroke-width="9" stroke-dasharray="60 6 20 4"/>

        <!-- drums -->
        <path d="M498 101V198H575V101ZM595 98V194H672V98Z" fill="url(#gDrum)"/>
        <g fill="#999" stroke="#000" stroke-width="3"><ellipse cx="536" cy="101" rx="38" ry="10"/><ellipse cx="633" cy="98" rx="38" ry="10"/></g>
        <path d="M498 152Q536 166 575 152M595 149Q633 163 672 149" fill="none" stroke="#0080c8" stroke-width="3"/>
        <path d="M490 198L685 192L682 214L490 208Z" fill="#000"/>
        <path d="M498 204h60M610 200h60M676 176v30M494 180v20" stroke="#999" stroke-width="6"/>
        <path d="M655 214h16v38h-16z" fill="#000"/>

        <!-- filling mechanism -->
        <g fill="none" stroke="#000">
          <path d="M410 212H512" stroke-width="26" stroke-dasharray="5 5 4 4 7 4"/>
          <path d="M402 232H520" stroke-width="20"/>
          <path d="M408 252H640" stroke-width="22" stroke-dasharray="30 3 12 4 50 2"/>
          <path d="M430 272H610" stroke-width="12" stroke-dasharray="20 5 40 3"/>
          <path d="M510 216H640" stroke-width="20" stroke-dasharray="24 6 10 3"/>
          <path d="M500 234H636" stroke-width="14" stroke-dasharray="40 5 16 8"/>
          <path d="M440 286H610" stroke-width="10" stroke-dasharray="60 4 30 12"/>
          <path d="M556 172V280M604 172V300M590 200V320" stroke-width="10"/>
          <path d="M640 254H760" stroke-width="14"/>
          <path d="M786 212H884" stroke-width="50"/>
          <path d="M800 186H870M780 230H860" stroke-width="14" stroke-dasharray="30 4"/>
          <path d="M760 252H860" stroke-width="16" stroke-dasharray="16 5 30 4"/>
          <path d="M910 146L902 200M896 170V240M884 172V248" stroke-width="12"/>
          <path d="M796 262V290M816 252V285M842 254V300" stroke-width="10"/>
          <path d="M690 216H700M750 214H786" stroke-width="16"/>
        </g>
        <path d="M700 216H750" stroke="#999" stroke-width="6"/>
        <path d="M870 192L886 190V230L868 240ZM888 222h10v22h-10zM758 222h22v14h-22zM690 256h60v8h-60zM520 208h40v6h-40z" fill="#999"/>
        <path d="M420 212v10M440 210v10M460 210v10M480 208v12M730 246h30M820 244h20M562 190v8M580 258v12" stroke="#700000" stroke-width="5"/>
        <g fill="none" stroke="#0080c8" stroke-width="3">
          <path d="M404 240H640" stroke-dasharray="5 14 12 9 3 20"/>
          <path d="M410 262H620" stroke-dasharray="4 9 18 12"/>
          <path d="M500 226H640" stroke-dasharray="10 6 24 8"/>
          <path d="M520 246H630" stroke-dasharray="16 7 5 7"/>
          <path d="M436 280H600" stroke-dasharray="8 20 22 9"/>
          <path d="M560 206H612M576 188H600" stroke-dasharray="12 4"/>
          <path d="M790 200H870" stroke-dasharray="4 14"/>
          <path d="M786 238H850" stroke-dasharray="20 8"/>
          <path d="M912 152L906 210M902 160V206M876 190V236M570 270V340M600 280V316"/>
          <path d="M798 250V275M824 262V290M834 262V285" stroke-width="5"/>
        </g>
        <path d="M568 214H590M572 220H582" stroke="#00c83c" stroke-width="6"/>
        <path d="M508 214v14M544 230h12M628 232h8M618 258h14M600 264h8M470 240h8M820 196h4M850 212h6M800 224h6" stroke="#999" stroke-width="5"/>

        <!-- left arm -->
        <path d="M150 270L260 258L400 254V268L300 277H200L150 272Z" fill="#999" stroke="#000" stroke-width="4"/>
        <path d="M320 256L400 252V264L320 262Z" fill="#000"/>
        <path d="M246 264H312M160 268L200 266M206 274h30" stroke="#0080c8" stroke-width="6"/>
        <path d="M134 238h12v44h-12zM70 290h40v12H70zM112 284h24v48h-24zM82 280h50v10H82zM146 262l12 6-10 24-8-4z" fill="#000"/>
        <path d="M78 282H134M118 292v12M122 334v18M140 250v30M106 296h16M130 316v12" stroke="#0080c8" stroke-width="5" stroke-dasharray="14 3"/>
        <path d="M74 310h28v24H74zM104 312h14v20h-14z" fill="url(#gDrum)" stroke="#000" stroke-width="2"/>
        <path d="M130 304v10" stroke="#00c83c" stroke-width="4"/>

        <!-- rail and supports -->
        <path d="M1150 244L2490 208L2490 218L1150 256Z" fill="#066"/>
        <path d="M1150 253L2560 220V236L1150 268Z" fill="#999" stroke="#000" stroke-width="5"/>
        <path d="M1230 262h24M1330 246l30-2M1380 258h24M1460 257h16M1530 255h24M1700 250h12M1850 246h20M1990 243h14M2080 241h14M2170 238h14M2320 234h16" stroke="#0080c8" stroke-width="5" stroke-dasharray="6 4"/>
        <g fill="#aaa" stroke="#000" stroke-width="4">
          <path d="M1187 258h20l2 68h-20zM1302 255h19v70h-19zM1615 247h18l2 70h-20zM1928 240h18l2 69h-20zM2242 232h18l2 70h-20zM2356 230h18v68h-18z"/>
        </g>
        <path d="M1188 290h18M1304 288h18M1616 280h18M1930 270h18M2244 264h18M2358 262h18" stroke="#0080c8" stroke-width="4"/>
        <path d="M1190 326h20M1304 326h20M1618 318h20M1930 309h20M2244 302h20M2356 298h20" stroke="#000" stroke-width="7"/>
        <path d="M1136 248h20v-12h16v32h-24z" fill="#000"/>
        <path d="M1160 246v20M1174 250v12" stroke="#0080c8" stroke-width="4"/>

        <!-- clamps along the rail -->
        <path d="M1210 216l8-4h35v12h-43zM1366 214l8-4h36v12h-44zM1522 210l8-4h35v12h-43zM1678 204l8-4h38v12h-46zM1834 201l8-4h38v12h-46zM1991 198l8-4h37v12h-45zM2149 192l8-4h36v12h-44z" fill="#000" stroke="#000" stroke-width="3"/>
        <g fill="#8c8c8c" stroke="#000" stroke-width="2">
          <path d="M1212 225h40v15h-40zM1368 222h40v15h-40zM1524 219h40v14h-40zM1680 213h42v15h-42zM1836 210h42v15h-42zM1993 207h42v15h-42zM2151 201h40v15h-40z"/>
        </g>
        <path d="M1222 232h16M1378 229h16M1534 226h16M1690 220h16M1846 217h16M2003 214h16M2161 208h16" stroke="#bbb" stroke-width="12"/>
        <path d="M1220 220h26M1376 218h26M1532 214h26M1688 208h26M1844 205h26M2001 202h26M2159 196h26" stroke="#aaa" stroke-width="4" stroke-dasharray="16 3"/>
        <path d="M1212 243h30M1368 239h30M1524 234h30M1680 230h30M1836 227h30M1993 224h30M2151 218h30" stroke="#0080c8" stroke-width="3"/>
        <path d="M2284 250h36l-4 30-10 12h-14l-10-14z" fill="#111"/>
        <path d="M2290 260h24M2288 250v16M2316 252v14" stroke="#0080c8" stroke-width="4"/>
        <path d="M2292 274h16v12h-16z" fill="#777"/>

        <!-- outfeed head -->
        <g fill="none" stroke="#000">
          <path d="M2500 124V216M2446 112V214M2430 180V216" stroke-width="14"/>
          <path d="M2448 124H2520" stroke-width="10" stroke-dasharray="12 5 30 3"/>
          <path d="M2474 132V210M2512 124V212" stroke-width="16" stroke-dasharray="22 3"/>
          <path d="M2400 214H2540" stroke-width="14" stroke-dasharray="20 4"/>
          <path d="M2536 188H2560M2560 200H2640" stroke-width="16"/>
          <path d="M2564 204V280M2586 206V266" stroke-width="12"/>
        </g>
        <path d="M2438 118v60M2458 140v60M2482 130v74M2498 122h20M2428 184h56M2500 150h14M2436 212h70M2388 214h34" stroke="#0080c8" stroke-width="4"/>
        <path d="M2466 140L2454 180M2480 180v30" stroke="#2a7029" stroke-width="7"/>
        <path d="M2496 162h22v34h-22zM2520 200h50v14h-50zM2540 222h30v10h-30zM2458 134l10 2-8 36-8-4z" fill="#999"/>
        <path d="M2570 190L2638 196V202L2570 198Z" fill="#2a7029" stroke="#000" stroke-width="2"/>
        <path d="M2640 187H2668L2674 195L2668 203H2640Z" fill="none" stroke="#0080c8" stroke-width="3"/>
        <path d="M2470 236h104v48h-104z" fill="#111"/>
        <path d="M2480 240h26v40h-26zM2516 246h24v26h-24zM2546 240h12v34h-12z" fill="url(#gDrum)"/>
        <circle cx="2492" cy="276" r="9" fill="#888" stroke="#000" stroke-width="4"/>
        <path d="M2474 240v40M2510 238v44M2560 244v36M2480 256h26" stroke="#0080c8" stroke-width="3"/>

        <!-- outfeed frame -->
        <g fill="#999" stroke="#000" stroke-width="4">
          <path d="M2474 284H2570V306H2474ZM2468 308H2572V320H2468Z"/>
          <path d="M2498 320h10v76h-10zM2585 264h12v130h-12zM2498 382h98v12h-98z"/>
          <path d="M2470 320h14l4 180h-14zM2560 302h12l6 192h-14zM2488 482h78v12h-78z"/>
          <path d="M2574 206h8v58h-8zM2618 206h8v58h-8zM2574 256h52v8h-52z"/>
        </g>
        <path d="M2470 328H2570M2524 482v14M2512 308v18M2562 400h12M2598 396v10" stroke="#0080c8" stroke-width="3"/>
        <path d="M2490 320V440M2490 395v20" stroke="#000" stroke-width="6"/>
        <path d="M2490 400v30" stroke="#2a7029" stroke-width="4" stroke-dasharray="6 5"/>

        <!-- feet -->
        <path d="M365 548v14M860 536v10M2573 496v20M2592 396v26" stroke="#888" stroke-width="5"/>
        <path d="M888 546v16M2461 504v16" stroke="#c00" stroke-width="6"/>
        <path d="M360 562h10v14l8 5v4h-26v-4l8-5zM855 546h10v16l8 5v4h-26v-4l8-5zM883 560h10v14l9 3v6h-28v-6l9-3zM2457 518h10v16l9 3v6h-28v-6l9-3zM2568 516h10v18l9 3v6h-28v-6l9-3zM2589 410h10v24l8 3v6h-26v-6l8-3z" fill="#000"/>
        <path d="M352 586h26M848 574h24M360 572h10" stroke="#0080c8" stroke-width="3"/>
        <path d="M884 571h8M2458 532h8" stroke="#c00" stroke-width="4"/>

        <!-- site mark -->
        <g shape-rendering="auto">
          <path d="M2073 119V68L2080 60V110L2112 119ZM2084 106V48L2092 40V102L2116 116L2100 112ZM2097 98V34L2106 24V90L2120 112L2106 104ZM2209 119V68L2202 60V110L2170 119ZM2198 106V48L2190 40V102L2166 116L2182 112ZM2185 98V34L2176 24V90L2162 112L2176 104Z" fill="url(#gLotus)"/>
          <path d="M2145 30Q2100 50 2114 82Q2122 66 2142 60Q2148 46 2145 30ZM2118 92Q2130 74 2150 62Q2168 52 2164 36Q2182 76 2158 94Q2138 106 2118 92ZM2114 110H2168L2140 119Z" fill="url(#gLotus)"/>
          <text class="mark" x="2242" y="88">智造资料网</text>
          <text class="mark-sub" x="2242" y="114">INTELLIGENT MANUFACTURING DATA</text>
        </g>

        <!-- axis triad -->
        <g shape-rendering="auto">
          <path d="M-232 1328H-164V1346L-160 1360V1396L-168 1399H-232Z" fill="#6b7c9c"/>
          <path d="M-232 1345H-168M-163 1326V1358L-160 1360V1396L-168 1399H-232" fill="none" stroke="#ccc" stroke-width="3"/>
          <path d="M-228 1324L-44 1320" stroke="#00e0e8" stroke-width="6"/>
          <path d="M-44 1308L-14 1319L-44 1332Z" fill="#00b8c0"/>
          <circle cx="-241" cy="1325" r="11" fill="#777"/>
          <path d="M-242 1340V1420" stroke="#ff0" stroke-width="5"/>
          <path d="M-236 1340L-235 1442" stroke="#00d000" stroke-width="8"/>
          <path d="M-247 1440H-222L-234 1470Z" fill="#009000"/>
          <path d="M-258 1344L-242 1326L-232 1342L-244 1360Z" fill="#e80000"/>
          <path d="M-262 1346L-240 1372M-240 1346L-262 1372" stroke="#ddd" stroke-width="2"/>
          <path d="M-6 1306H14L-6 1331H14" fill="none" stroke="#c8ccd6" stroke-width="3"/>
          <path d="M-246 1476L-236 1490L-226 1476M-236 1490V1502" fill="none" stroke="#e00000" stroke-width="3"/>
        </g>
      </svg>

      <div class="view-tools">
        <button><svg><use href="#bars"/></svg></button>
        <button><svg><use href="#fitwin"/></svg></button>
        <button><svg><use href="#zoomhand"/></svg></button>
        <button><svg><use href="#axesdark"/></svg></button>
        <button><svg><use href="#cubetop"/></svg></button>
        <button><svg><use href="#cubebottom"/></svg></button>
        <button><svg><use href="#cubeback"/></svg></button>
        <button><svg><use href="#cuberight"/></svg></button>
        <button><svg><use href="#cubefront"/></svg></button>
        <button><svg><use href="#cubeleft"/></svg></button>
        <button><svg><use href="#cubeiso"/></svg></button>
      </div>
      <div class="view-tools column">
        <button><svg><use href="#cylwire"/></svg></button>
        <button><svg><use href="#cylhid"/></svg></button>
        <button class="on"><svg><use href="#cylblue"/></svg></button>
        <button><svg><use href="#cylpale"/></svg></button>
        <button><svg><use href="#cylmesh"/></svg></button>
      </div>
    </div>
  </main>

  <footer>
    <div class="status">
      <div class="cell grip find"><input type="text" aria-label="搜索"><svg viewBox="0 0 12 12"><circle cx="7" cy="5" r="4" fill="none" stroke="#4a90c8" stroke-width="1.500"/></svg></div>
      <div class="cell grip plane">绝对 XY 上视图</div>
      <div class="cell view">绝对视图</div>
      <div class="cell grip layer">LAYER0</div>
      <div class="cell blank"></div>
      <div class="cell swatch"><i></i></div>
      <div class="cell swatch"><i></i></div>
      <div class="cell swatch"><i></i></div>
      <div class="cell world"><svg><use href="#globe"/></svg></div>
    </div>
    <div class="status">
      <div class="cell snap">拴牢</div>
      <button class="cell"><svg><use href="#st-swirl"/></svg></button>
      <button class="cell"><svg><use href="#st-wand"/></svg></button>
      <button class="cell"><svg><use href="#st-hand"/></svg></button>
      <button class="cell"><svg><use href="#help"/></svg></button>
      <button class="cell"><svg><use href="#st-link"/></svg></button>
      <button class="cell"><svg><use href="#st-cube"/></svg></button>
      <button class="cell"><svg><use href="#st-doc"/></svg></button>
      <button class="cell"><svg><use href="#st-check"/></svg></button>
      <button class="cell"><svg><use href="#st-split"/></svg></button>
      <div class="cell scale">LS: 1.00 PS: 1.00</div>
      <div class="cell unit">单位: 毫米</div>
      <div class="cell coords"><span>X =-85177.15</span> Y = 22098.58 Z = 00000.00</div>
    </div>
    <div class="taskbar">
      <div class="task search-box"></div>
      <div class="task grey"></div>
      <div class="task orange"></div>
      <time>19:04</time>
    </div>
  </footer>

  <!-- floating input method bar -->
  <div class="ime">
    <svg class="ime-logo" viewBox="0 0 28 28"><path d="M4 5L22 1Q25 1 25 4L27 21Q27 24 24 25L8 27Q5 27 4 24L1 9Q1 6 4 5Z" fill="#f2501e"/><path d="M21 7Q8 6 8 11Q8 14 15 14Q21 15 20 18Q19 22 7 20" fill="none" stroke="#fff" stroke-width="4"/></svg>
    <button class="lang">中</button>
    <button><svg viewBox="0 0 18 18"><circle cx="5" cy="6" r="2" fill="none" stroke-width="1.500"/><path d="M12 10h2v2l-2 3" stroke-width="2" fill="none"/></svg></button>
    <button><svg viewBox="0 0 18 18"><circle cx="9" cy="9" r="7" fill="none" stroke-width="1.500"/><path d="M5 10q4 5 8 0M6 6v2M12 6v2" stroke-width="1.500" fill="none"/></svg></button>
    <button><svg viewBox="0 0 18 18"><rect x="6" y="1" width="6" height="10" rx="3"/><path d="M4 8q0 5 5 5q5 0 5-5M9 13v4" fill="none" stroke-width="2"/></svg></button>
    <button><svg viewBox="0 0 18 18"><path d="M1 4h16v11H1z" fill="none" stroke-width="1.500"/><path d="M3 7h12M3 10h12" stroke-width="1.500" stroke-dasharray="2 1"/><path d="M5 13h8"/></svg></button>
    <button class="dim"><svg viewBox="0 0 18 18"><circle cx="8" cy="5" r="3"/><path d="M2 15q0-6 6-6q5 0 6 6z"/><circle cx="14" cy="12" r="4" stroke="#fff"/></svg></button>
    <button><svg viewBox="0 0 18 18"><path d="M6 2q3 3 6 0l5 4-3 3-1-1v8H5V8L4 9 1 6z"/></svg></button>
    <button><svg viewBox="0 0 18 18"><path d="M2 2h5v5H2zM2 11h5v5H2zM11 11h5v5h-5z"/><path d="M11 3h4v4h-4z" fill="none" stroke-width="1.500"/></svg></button>
  </div>
</body>

</html>
```

FILE: styles.css
```css
body {
  display: flex;
  flex-direction: column;
  height: 100vh;
  margin: 0;
  overflow: hidden;
  position: relative;
  background: #d6dbe9;
  color: #000;
  font: 12px/18px "Open Sans", "Noto Sans CJK SC", sans-serif;
}

button {
  display: flex;
  align-items: center;
  justify-content: center;
  box-sizing: border-box;
  margin: 0;
  padding: 0;
  border: 0;
  background: none;
  color: inherit;
  font: inherit;
}

button svg {
  width: 20px;
  height: 20px;
}

h1,
h2 {
  margin: 0;
  font-size: 12px;
  font-weight: normal;
}

.sprite {
  position: absolute;
  width: 0;
  height: 0;
}

/* title bar */

.titlebar {
  display: flex;
  align-items: center;
  height: 23px;
  background: #fff;
}

.logo {
  width: 18px;
  height: 18px;
  margin-left: 1px;
}

.quick {
  display: flex;
  height: 14px;
  align-items: center;
  margin-left: 1px;
  padding-left: 6px;
  border-left: 1px solid #999;
  border-right: 1px solid #999;
}

.quick button {
  width: 24px;
}

.quick button.more {
  width: 18px;
  margin-right: 4px;
}

.quick .more svg {
  width: 8px;
  height: 8px;
}

.titlebar h1 {
  flex: 1;
  font-size: 13px;
  text-align: center;
}

.window-buttons,
.doc-buttons {
  display: flex;
}

.window-buttons {
  padding-right: 2px;
}

.window-buttons button {
  width: 46px;
}

.window-buttons svg,
.doc-buttons svg {
  width: 12px;
  height: 12px;
  fill: none;
  stroke: #000;
}

/* menu */

.menubar {
  display: flex;
  height: 19px;
  align-items: center;
}

.menubar a {
  padding: 0 7px;
  color: #000;
  text-decoration: none;
}

.doc-buttons {
  margin-left: auto;
}

.doc-buttons button {
  width: 18px;
}

.doc-buttons svg {
  stroke: #a39c86;
}

/* ribbon */

.ribbon {
  border-left: 9px solid #4d6082;
  padding-left: 3px;
}

.tabs {
  display: flex;
  align-items: flex-end;
  height: 22px;
}

.tabs button {
  height: 20px;
  padding: 0 5px 0 4px;
  border: 1px solid #98958a;
  border-width: 1px 0 0 1px;
  background: #e6f1fc;
}

.tabs button:last-child {
  border-right-width: 1px;
}

.tabs button.active {
  height: 22px;
  background: #b3d4f8;
  font-weight: bold;
}

.tabs button.drop {
  width: 18px;
  padding: 0;
}

.tabs .drop svg {
  width: 8px;
  height: 8px;
}

.groups {
  display: flex;
  height: 45px;
}

.group {
  padding: 3px 9px 0 8px;
  background: radial-gradient(circle at 1px 1px, #fff 1px, #a8aebd 2px, transparent 2px) 1px 0 / 4px 4px repeat-y;
}

.tools {
  display: flex;
}

.tools button {
  width: 26px;
  height: 24px;
}

.tools button.on {
  width: 24px;
  margin: 0 1px;
  border: 1px solid #e5c365;
  background: #ffe37d;
}

.group h2 {
  margin-top: 1px;
  text-align: center;
}

/* work area */

main {
  display: flex;
  flex: 1;
  min-height: 0;
}

.sidebar {
  box-sizing: border-box;
  width: 60px;
  border-top: 9px solid #4d6082;
}

.palette {
  display: grid;
  grid-template-columns: 26px 26px;
  grid-auto-rows: 26px;
  margin-top: 3px;
  padding: 10px 3px 13px 5px;
  background:
    radial-gradient(circle at 1px 1px, #fff 1px, #a8aebd 2px, transparent 2px) 0 0 / 4px 4px repeat-x,
    radial-gradient(circle at 1px 1px, #fff 1px, #a8aebd 2px, transparent 2px) 0 100% / 4px 4px repeat-x;
}

.viewport {
  flex: 1;
  position: relative;
  overflow: hidden;
  background: linear-gradient(#000016, #48668f);
}

.scene {
  position: absolute;
  top: 0;
  left: 0;
  width: 100%;
  height: 100%;
}

.mark {
  font: bold 49px "Noto Sans CJK SC", sans-serif;
  fill: #f07a1e;
}

.mark-sub {
  font: bold 13px "Liberation Sans", sans-serif;
  fill: #e8801e;
}

.view-tools {
  display: flex;
  gap: 4px;
  padding: 4px;
  position: relative;
}

.view-tools.column {
  flex-direction: column;
  padding-top: 0;
}

.view-tools button {
  width: 24px;
  height: 24px;
  background: #7f8098;
}

.view-tools button.on {
  border: 1px solid #f0c060;
  background: #8f8450;
}

/* status bars */

.status {
  display: flex;
  justify-content: flex-end;
  height: 19px;
  overflow: hidden;
}

.status:first-child {
  margin-left: 2px;
  border-bottom: 1px solid #a0a0a0;
}

.cell {
  display: flex;
  align-items: center;
  box-sizing: border-box;
  height: 17px;
  margin-top: 1px;
  border-left: 1px solid #a0a0a0;
  white-space: nowrap;
}

.cell.grip {
  border-left: 0;
  background: radial-gradient(circle at 1px 1px, #999fb0 1px, transparent 1px) 0 0 / 3px 3px repeat-y;
}

button.cell {
  width: 31px;
}

button.cell svg {
  width: 17px;
  height: 17px;
}

.find {
  width: 139px;
}

.find input {
  box-sizing: border-box;
  width: 131px;
  height: 17px;
  margin-left: 3px;
  border: 0;
  background: #fff;
}

.find svg {
  flex: none;
  width: 12px;
  height: 12px;
  margin-left: -10px;
}

.plane {
  width: 115px;
  padding-left: 10px;
}

.view {
  width: 67px;
  padding-left: 8px;
}

.layer {
  width: 67px;
  padding-left: 9px;
  font-weight: bold;
}

.blank {
  width: 31px;
}

.swatch {
  width: 43px;
  padding-left: 4px;
}

.swatch i {
  width: 32px;
  height: 12px;
  background: #48668f;
}

.world {
  width: 34px;
  padding-left: 7px;
}

.world svg {
  width: 14px;
  height: 14px;
}

.snap {
  width: 43px;
  padding-left: 8px;
}

.scale {
  width: 126px;
  padding-left: 9px;
}

.unit {
  width: 74px;
  padding-left: 8px;
}

.coords {
  width: 266px;
  padding-left: 8px;
  font-size: 13px;
  white-space: pre;
}

.coords span {
  color: #f00;
}

/* windows taskbar, only its top edge is on screen */

.taskbar {
  display: flex;
  height: 8px;
  overflow: hidden;
  background: #1e1f20;
  color: #fff;
}

.task {
  width: 48px;
  margin-right: 1px;
}

.search-box {
  box-sizing: border-box;
  width: 343px;
  margin: 0 197px 0 49px;
  border-top: 1px solid #bbb;
  background: #f1f1f1;
}

.grey {
  background: #4d4d4d;
}

.orange {
  background: #a65e28;
}

.taskbar time {
  margin: 1px 75px 0 auto;
}

/* input method bar */

.ime {
  display: flex;
  align-items: center;
  box-sizing: border-box;
  height: 24px;
  padding: 0 1px 0 10px;
  position: absolute;
  right: 354px;
  bottom: 15px;
  border: 1px solid #b0b4bc;
  background: #fff;
  color: #2577c4;
}

.ime button {
  width: 22px;
  fill: #2577c4;
  stroke: #2577c4;
}

.ime button svg {
  width: 18px;
  height: 18px;
}

.ime .lang {
  font-size: 15px;
  font-weight: bold;
  stroke: none;
}

.ime .dim {
  fill: #b4bfd0;
  stroke: #b4bfd0;
}

.ime-logo {
  position: absolute;
  top: -4px;
  left: -20px;
  width: 28px;
  height: 28px;
}
```
